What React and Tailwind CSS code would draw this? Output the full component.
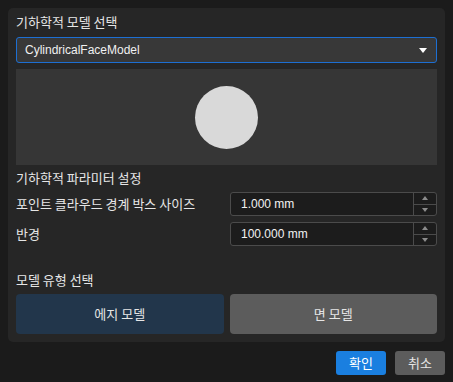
import React from "react";

const font = { fontFamily: '"Noto Sans CJK KR", "Liberation Sans", sans-serif' };

function SpinBox({ value }) {
  return (
    <div className="flex h-[24px] w-[207px] rounded-[3px] border border-[#4b4b4b] bg-[#1c1c1c]">
      <div className="flex flex-1 items-center pl-[10px] text-[12px] text-[#f2f2f2]" style={{ fontFamily: '"Liberation Sans", sans-serif' }}>
        {value}
      </div>
      <div className="flex w-[23px] flex-col border-l border-[#4b4b4b]">
        <div className="flex flex-1 items-center justify-center border-b border-[#4b4b4b]">
          <svg width="6" height="4" viewBox="0 0 6 4">
            <path d="M0 4 L3 0 L6 4 Z" fill="#8c8c8c" />
          </svg>
        </div>
        <div className="flex flex-1 items-center justify-center">
          <svg width="6" height="4" viewBox="0 0 6 4">
            <path d="M0 0 L3 4 L6 0 Z" fill="#8c8c8c" />
          </svg>
        </div>
      </div>
    </div>
  );
}

export default function App() {
  return (
    <div className="flex h-[382px] w-[453px] flex-col bg-[#1b1b1b] p-2 text-[#e6e6e6]" style={font}>
      <div className="flex flex-col rounded-[5px] bg-[#262626] px-2 pb-[8px] pt-[5px]">
        <div className="h-[18px] text-[13px] leading-[18px]">기하학적 모델 선택</div>

        <div className="mt-[6px] flex h-[26px] items-center justify-between rounded-[3px] border border-[#1d6fd3] bg-[#383838] pl-[8px] pr-[9px]">
          <span className="text-[12px] text-[#f0f0f0]" style={{ fontFamily: '"Liberation Sans", sans-serif' }}>
            CylindricalFaceModel
          </span>
          <svg width="8" height="5" viewBox="0 0 8 5">
            <path d="M0 0 L8 0 L4 5 Z" fill="#ffffff" />
          </svg>
        </div>

        <div className="mt-[6px] flex h-[96px] items-center justify-center bg-[#363636]">
          <div className="h-[63px] w-[63px] rounded-full bg-[#d9d9d9]" />
        </div>

        <div className="mt-[4px] h-[18px] text-[13px] leading-[18px]">기하학적 파라미터 설정</div>

        <div className="mt-[5px] flex items-center justify-between">
          <span className="text-[13px]">포인트 클라우드 경계 박스 사이즈</span>
          <SpinBox value="1.000 mm" />
        </div>
        <div className="mt-[6px] flex items-center justify-between">
          <span className="text-[13px]">반경</span>
          <SpinBox value="100.000 mm" />
        </div>

        <div className="mt-[25px] h-[18px] text-[13px] leading-[18px]">모델 유형 선택</div>

        <div className="mt-[5px] grid h-[40px] grid-cols-2 gap-[6px]">
          <button className="rounded-[4px] bg-[#22364b] text-[13px] text-[#e6e6e6]">에지 모델</button>
          <button className="rounded-[4px] bg-[#5c5c5c] text-[13px] text-[#e6e6e6]">면 모델</button>
        </div>
      </div>

      <div className="mt-[9px] flex justify-end gap-[9px]">
        <button className="h-[24px] w-[50px] rounded-[3px] bg-[#1a7fe0] text-[13px] text-white">확인</button>
        <button className="h-[24px] w-[50px] rounded-[3px] bg-[#5c5c5c] text-[13px] text-[#e6e6e6]">취소</button>
      </div>
    </div>
  );
}
